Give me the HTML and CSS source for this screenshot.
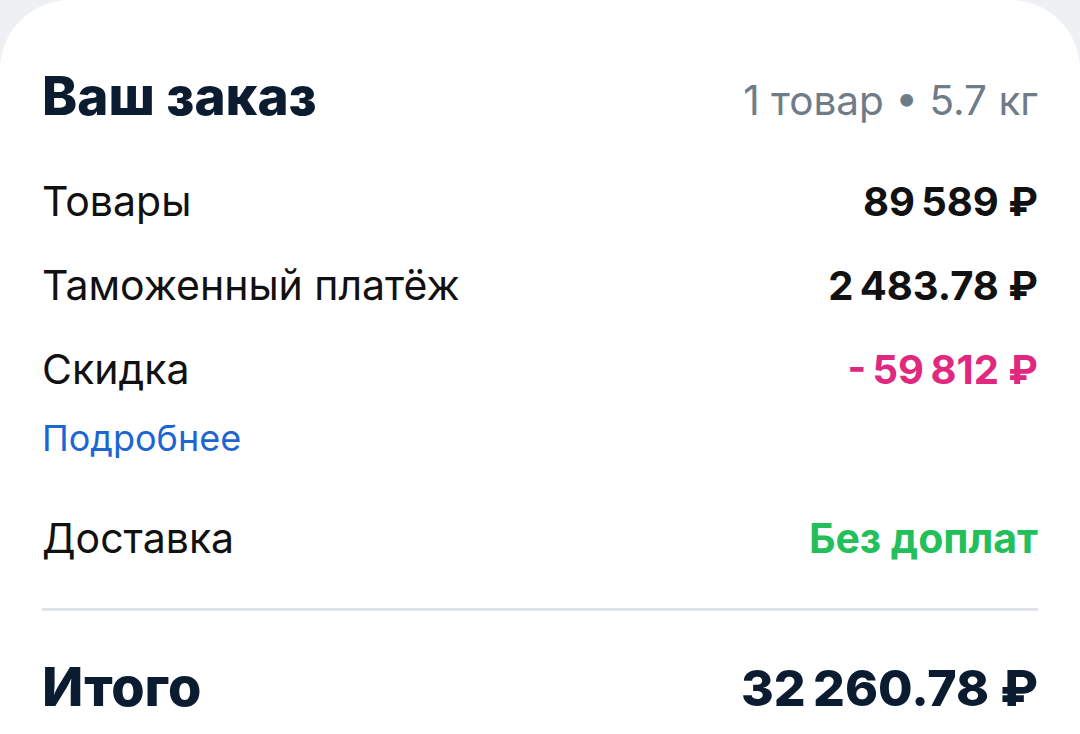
FILE: index.html
```html
<!DOCTYPE html>
<html lang="ru">
<head>
  <meta charset="UTF-8">
  <meta name="viewport" content="width=device-width, initial-scale=1.0">
  <title>Ваш заказ</title>
  <link rel="stylesheet" href="styles.css">
</head>
<body>
  <div class="card">
    <div class="card-header">
      <h1>Ваш заказ</h1>
      <span class="meta">1 товар • 5.7 кг</span>
    </div>

    <div class="row">
      <span class="label">Товары</span>
      <span class="amount">89&#8239;589&nbsp;₽</span>
    </div>
    <div class="row">
      <span class="label">Таможенный платёж</span>
      <span class="amount">2&#8239;483.78&nbsp;₽</span>
    </div>
    <div class="row">
      <span class="label">Скидка</span>
      <span class="amount discount">-&#8239;59&#8239;812&nbsp;₽</span>
    </div>
    <a class="more" href="#">Подробнее</a>

    <div class="row delivery">
      <span class="label">Доставка</span>
      <span class="amount free">Без доплат</span>
    </div>

    <div class="divider"></div>

    <div class="total">
      <span class="total-label">Итого</span>
      <span>32&#8239;260.78&nbsp;₽</span>
    </div>
  </div>
</body>
</html>
```

FILE: styles.css
```css
body {
  margin: 0;
  font-family: Inter, "Noto Sans", sans-serif;
  background-color: #eef0f4;
  overflow: hidden;
}

.card {
  background-color: #ffffff;
  border-radius: 70px 70px 0 0;
  padding: 66px 42px 40px;
  min-height: 734px;
  box-sizing: border-box;
}

.card-header {
  display: flex;
  justify-content: space-between;
  align-items: baseline;
  margin-bottom: 33px;
}

h1 {
  margin: 0;
  font-size: 53px;
  line-height: 60px;
  font-weight: 800;
  color: #0b1c30;
}

.meta {
  font-size: 40.5px;
  color: #6f7c88;
}

.row {
  display: flex;
  justify-content: space-between;
  align-items: baseline;
  height: 84px;
  line-height: 84px;
  font-size: 41px;
  color: #111111;
}

.amount {
  font-weight: 700;
  font-size: 40px;
}

.discount {
  color: #e0287f;
}

.free {
  color: #23bf5a;
  font-size: 41px;
}

.more {
  display: block;
  margin-top: 7px;
  font-size: 36px;
  line-height: 40px;
  color: #1b66d2;
  text-decoration: none;
}

.delivery {
  margin-top: 38px;
}

.divider {
  height: 3px;
  background-color: #e0e4e9;
  margin-top: 28px;
}

.total {
  display: flex;
  justify-content: space-between;
  align-items: baseline;
  margin-top: 46px;
  font-size: 50px;
  line-height: 60px;
  font-weight: 800;
  color: #0b1c30;
}

.total-label {
  font-size: 54px;
}
```
